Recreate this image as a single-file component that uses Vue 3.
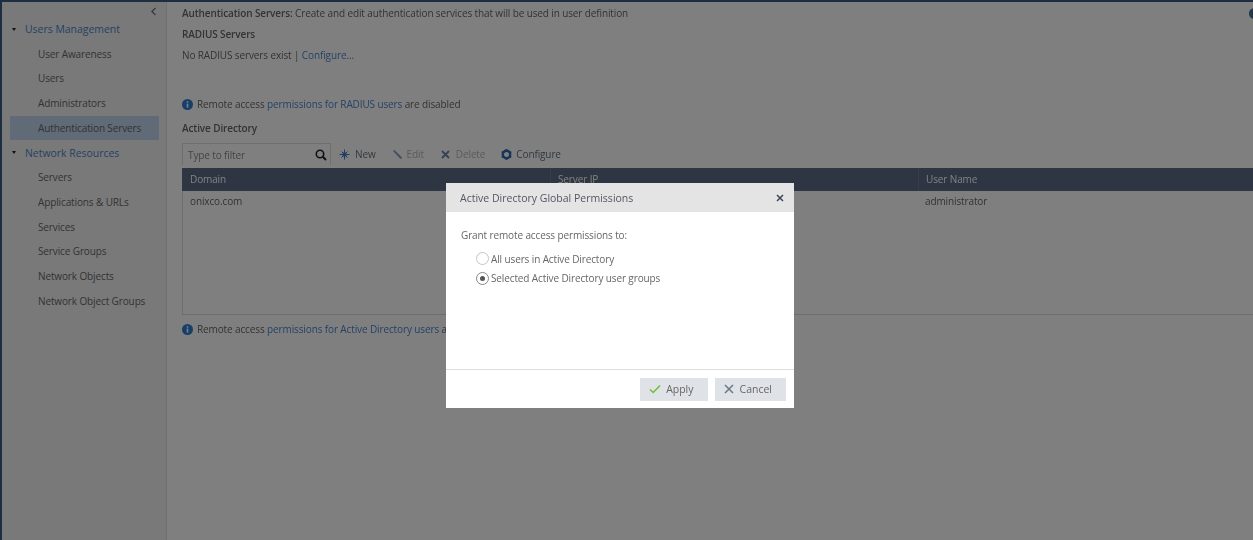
<script setup>
const groups = [
  { title: 'Users Management', items: ['User Awareness', 'Users', 'Administrators', 'Authentication Servers'] },
  { title: 'Network Resources', items: ['Servers', 'Applications & URLs', 'Services', 'Service Groups', 'Network Objects', 'Network Object Groups'] }
]
</script>

<template>
  <div class="page">
    <div class="frame">
      <aside class="sidebar">
        <svg class="collapse" width="7" height="9" viewBox="0 0 7 9"><path d="M5.5 1 L1.8 4.5 L5.5 8" fill="none" stroke="#5a6a7c" stroke-width="1.1"/></svg>
        <div v-for="g in groups" :key="g.title" class="group">
          <div class="group-title"><span class="caret"></span>{{ g.title }}</div>
          <div v-for="i in g.items" :key="i" class="nav-item" :class="{ selected: i === 'Authentication Servers' }">{{ i }}</div>
        </div>
      </aside>
      <main class="main">
        <p class="line intro"><b>Authentication Servers:</b> Create and edit authentication services that will be used in user definition</p>
        <h4 class="heading radius">RADIUS Servers</h4>
        <p class="line none">No RADIUS servers exist | <a>Configure...</a></p>
        <p class="line info first">
          <svg class="info-icon" width="11" height="11" viewBox="0 0 11 11"><circle cx="5.5" cy="5.5" r="5.5" fill="#2a7fd0"/><rect x="4.7" y="4.6" width="1.6" height="4" fill="#fff"/><rect x="4.7" y="2.2" width="1.6" height="1.5" fill="#fff"/></svg>
          Remote access&nbsp;<a>permissions for RADIUS users</a>&nbsp;are disabled
        </p>
        <h4 class="heading ad">Active Directory</h4>
        <div class="toolbar">
          <div class="filter">
            <span>Type to filter</span>
            <svg width="12" height="12" viewBox="0 0 12 12"><circle cx="5" cy="5" r="3.7" fill="none" stroke="#1c2530" stroke-width="1.6"/><path d="M7.8 7.8 L11 11" stroke="#1c2530" stroke-width="2"/></svg>
          </div>
          <span class="tool new">
            <svg width="11" height="11" viewBox="0 0 11 11"><path d="M5.5 0.5 V10.5 M0.5 5.5 H10.5 M2.5 2.5 L8.5 8.5 M8.5 2.5 L2.5 8.5" stroke="#3f7fc4" stroke-width="1"/><circle cx="5.5" cy="5.5" r="2.2" fill="#3f7fc4"/></svg>New
          </span>
          <span class="tool off edit">
            <svg width="11" height="11" viewBox="0 0 11 11"><path d="M1 2 L2.5 1 L9.5 8 L10 10 L8 9.5 Z" fill="#7f9cc0"/></svg>Edit
          </span>
          <span class="tool off del">
            <svg width="9" height="9" viewBox="0 0 9 9"><path d="M1 1 L8 8 M8 1 L1 8" stroke="#6a84a4" stroke-width="1.8"/></svg>Delete
          </span>
          <span class="tool conf">
            <svg width="11" height="11" viewBox="0 0 11 11"><circle cx="5.5" cy="5.5" r="3.7" fill="none" stroke="#2f6aa8" stroke-width="2.4"/><path d="M5.5 0 V2.5 M5.5 8.5 V11 M0.7 2.7 L2.9 4 M8.1 7 L10.3 8.3 M10.3 2.7 L8.1 4 M2.9 7 L0.7 8.3" stroke="#2f6aa8" stroke-width="1.6"/></svg>Configure
          </span>
        </div>
        <div class="table">
          <div class="thead">
            <div class="c1">Domain</div><div class="c2">Server IP</div><div class="c3">User Name</div>
          </div>
          <div class="trow">
            <div class="c1">onixco.com</div><div class="c2"></div><div class="c3">administrator</div>
          </div>
        </div>
        <p class="line info second">
          <svg class="info-icon" width="11" height="11" viewBox="0 0 11 11"><circle cx="5.5" cy="5.5" r="5.5" fill="#2a7fd0"/><rect x="4.7" y="4.6" width="1.6" height="4" fill="#fff"/><rect x="4.7" y="2.2" width="1.6" height="1.5" fill="#fff"/></svg>
          Remote access&nbsp;<a>permissions for Active Directory users</a>&nbsp;are disabled
        </p>
      </main>
    </div>
    <span class="corner-dot"></span>
    <div class="overlay"></div>
    <section class="modal">
      <header class="modal-head">
        <span>Active Directory Global Permissions</span>
        <svg width="8" height="8" viewBox="0 0 8 8"><path d="M1 1 L7 7 M7 1 L1 7" stroke="#3a4656" stroke-width="1.5"/></svg>
      </header>
      <div class="modal-body">
        <p class="grant">Grant remote access permissions to:</p>
        <label class="radio"><span class="dot"></span>All users in Active Directory</label>
        <label class="radio"><span class="dot on"></span>Selected Active Directory user groups</label>
      </div>
      <footer class="modal-foot">
        <button class="btn">
          <svg width="12" height="10" viewBox="0 0 12 10"><path d="M1 5.5 L4.2 8.5 L11 1.5" fill="none" stroke="#6fbf3a" stroke-width="1.6"/></svg>Apply
        </button>
        <button class="btn">
          <svg width="11" height="10" viewBox="0 0 11 10"><path d="M1 1 L9 9 M9 1 L1 9" fill="none" stroke="#6b7683" stroke-width="1.5"/></svg>Cancel
        </button>
      </footer>
    </section>
  </div>
</template>

<style>
html, body { margin: 0; padding: 0; overflow: hidden; }
</style>

<style scoped>
* { box-sizing: border-box; }
.page {
  position: relative;
  width: 1253px;
  height: 540px;
  overflow: hidden;
  background: #fff;
  font-family: "Open Sans", sans-serif;
  font-size: 10px;
  letter-spacing: -0.12px;
  color: #666;
}
.frame {
  display: flex;
  height: 540px;
  border-top: 2px solid #3f5a80;
  border-left: 2px solid #3f5a80;
  filter: blur(0.45px);
}
.sidebar {
  position: relative;
  width: 165px;
  flex: none;
  background: #f3f3f3;
  border-right: 1px solid #e0e0e0;
  padding-top: 15px;
}
.collapse { position: absolute; left: 148px; top: 5px; }
.group-title {
  display: flex;
  align-items: center;
  height: 24.7px;
  color: #4a84cc;
  font-size: 10.45px;
  letter-spacing: 0;
  padding-left: 10px;
}
.caret {
  width: 0; height: 0;
  border-left: 2.5px solid transparent;
  border-right: 2.5px solid transparent;
  border-top: 3px solid #222;
  margin-right: 9px;
}
.nav-item {
  height: 24.7px;
  line-height: 25px;
  padding-left: 28px;
  margin: 0 7px 0 8px;
}
.nav-item.selected { background: #c0d6ee; }
.main { flex: 1; min-width: 0; padding: 4px 0 0 15px; }
.line, .heading { margin: 0; white-space: nowrap; }
.line { display: flex; align-items: center; height: 14px; }
.line.intro, .line.none { display: block; line-height: 14px; }
.heading { font-size: 10px; font-weight: 600; height: 14px; line-height: 14px; }
b { font-weight: 600; }
a { color: #4a84cc; }
.radius { margin-top: 7px; }
.none { margin-top: 7px; }
.first { margin-top: 35px; }
.ad { margin-top: 10px; }
.info-icon { margin-right: 4px; flex: none; }
.toolbar { display: flex; align-items: center; height: 22px; margin-top: 8px; }
.filter {
  width: 149px;
  height: 22px;
  display: flex;
  align-items: center;
  justify-content: space-between;
  padding: 0 3px 0 5px;
  border: 1px solid #ddd;
  border-bottom: 0;
  color: #888;
}
.tool { display: inline-flex; align-items: center; gap: 5px; color: #66717e; }
.tool.off { color: #b5b5b5; }
.new { margin-left: 8px; }
.edit { margin-left: 16px; gap: 4px; }
.del { margin-left: 17px; gap: 6px; }
.conf { margin-left: 16px; gap: 4px; }
.table {
  margin-top: 3px;
  height: 147px;
  border: 1px solid #ddd;
  border-top: 0;
  border-right: 0;
}
.thead { display: flex; height: 23px; background: #5d6d87; color: #fff; margin-left: -1px; }
.thead > div { line-height: 23px; }
.thead .c2, .thead .c3 { border-left: 1px solid #6c7a92; }
.trow { display: flex; height: 22px; line-height: 20px; margin-left: -1px; }
.c1 { width: 368px; padding-left: 8px; flex: none; }
.c2 { width: 368px; padding-left: 7px; flex: none; }
.c3 { flex: 1; padding-left: 7px; }
.second { margin-top: 7px; }
.corner-dot {
  position: absolute; left: 1249px; top: 8px;
  width: 11px; height: 11px; border-radius: 50%;
  background: #4c6a94;
}
.overlay { position: absolute; inset: 0; background: rgba(0,0,0,.5); }
.modal {
  position: absolute;
  left: 446px; top: 183px;
  width: 348px; height: 225px;
  background: #fff;
  display: flex;
  flex-direction: column;
  color: #666;
}
.modal-head {
  height: 29px;
  flex: none;
  background: #e4e4e4;
  display: flex;
  align-items: center;
  justify-content: space-between;
  padding: 0 10px 0 14px;
  font-size: 10.5px;
  letter-spacing: 0;
  color: #556;
}
.modal-head > span, .modal-body, .modal-foot .btn { filter: blur(0.3px); }
.modal-body { flex: 1; padding: 16px 0 0 15px; }
.grant { margin: 0 0 7px; line-height: 14px; }
.radio { display: flex; align-items: center; height: 19.5px; padding-left: 15px; }
.dot {
  width: 13px; height: 13px; border-radius: 50%;
  border: 1px solid #c4c4c4; margin-right: 2px; background: #fff;
  display: flex; align-items: center; justify-content: center;
}
.dot.on { border-color: #888; }
.dot.on::after { content: ""; width: 5px; height: 5px; border-radius: 50%; background: #555; }
.modal-foot {
  height: 39px;
  flex: none;
  border-top: 1px solid #ddd;
  display: flex;
  justify-content: flex-end;
  align-items: center;
  gap: 7px;
  padding: 0 8px 0 0;
}
.btn {
  height: 23px;
  border: 0;
  background: #dfe3e8;
  color: #666;
  font: inherit;
  font-size: 10.5px;
  letter-spacing: 0;
  display: inline-flex;
  align-items: center;
  gap: 5px;
  padding: 0 14px 0 9px;
}
</style>
